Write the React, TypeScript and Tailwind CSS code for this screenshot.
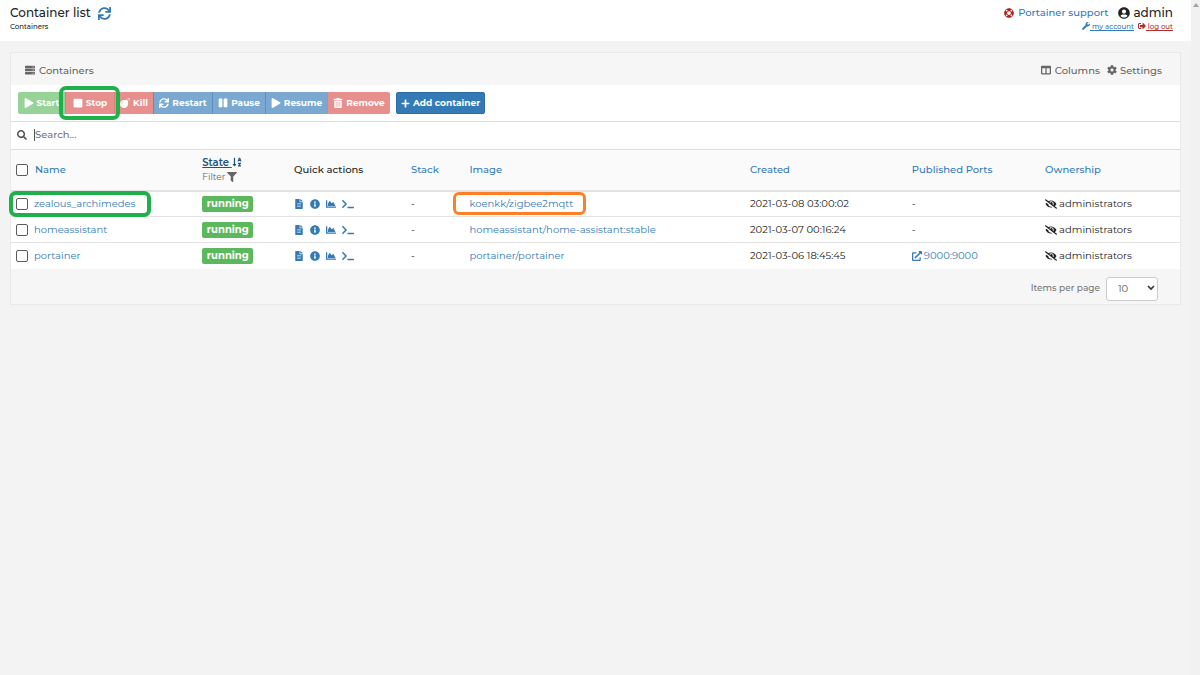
import React from "react";
import {
  FaBomb, FaChartArea, FaCog, FaColumns, FaExternalLinkAlt, FaEyeSlash, FaFileAlt, FaFilter,
  FaInfoCircle, FaLifeRing, FaPause, FaPlay, FaPlus, FaSearch, FaServer, FaSignOutAlt,
  FaSortAlphaDown, FaStop, FaSync, FaTerminal, FaTrashAlt, FaUserCircle, FaWrench,
} from "react-icons/fa";

type Container = { name: string; image: string; created: string; port?: string };

const containers: Container[] = [
  { name: "zealous_archimedes", image: "koenkk/zigbee2mqtt", created: "2021-03-08 03:00:02" },
  { name: "homeassistant", image: "homeassistant/home-assistant:stable", created: "2021-03-07 00:16:24" },
  { name: "portainer", image: "portainer/portainer", created: "2021-03-06 18:45:45", port: "9000:9000" },
];

const checkbox =
  "size-3 shrink-0 appearance-none rounded-[2px] border border-[#5c5c5c] bg-white checked:bg-[#337ab7]";
const action = "flex h-[22px] items-center justify-center gap-[3px] text-[9px] font-bold text-white";
const green = "border-[#84c284] bg-[#97d297]";
const red = "border-[#d98280] bg-[#e78f8d]";
const blue = "border-[#5c8fbf] bg-[#7ba8d1]";

const actions = [
  { label: "Start", Icon: FaPlay, style: `w-[47px] rounded-l-[2px] ${green}` },
  { label: "Stop", Icon: FaStop, style: `w-[49px] border-l ${red}`, ring: true },
  { label: "Kill", Icon: FaBomb, style: `w-[39px] border-l ${red}` },
  { label: "Restart", Icon: FaSync, style: `w-[59px] border-l ${blue}` },
  { label: "Pause", Icon: FaPause, style: `w-[53px] border-l ${blue}` },
  { label: "Resume", Icon: FaPlay, style: `w-[62px] border-l ${blue}` },
  { label: "Remove", Icon: FaTrashAlt, style: `w-[63px] rounded-r-[2px] border-l ${red}` },
];

function Header() {
  return (
    <header className="flex h-[41px] justify-between bg-white pl-[10px] pr-[18px] pt-[5px]">
      <div>
        <h1 className="flex items-center gap-[7px] text-[12px] font-medium leading-4 text-[#222]">
          Container list
          <a href="#refresh" aria-label="Refresh"><FaSync className="size-[13px] text-[#337ab7]" /></a>
        </h1>
        <p className="text-[7px] font-medium leading-3 text-[#222]">Containers</p>
      </div>
      <div className="flex flex-col items-end">
        <div className="flex items-center gap-[10px] leading-4">
          <a href="#support" className="flex items-center gap-1 text-[10px] font-medium text-[#337ab7]">
            <FaLifeRing className="size-[10px] text-[#b32020]" />Portainer support
          </a>
          <span className="flex items-center gap-[3px] text-[12px] font-medium text-[#222]">
            <FaUserCircle className="size-3" />admin
          </span>
        </div>
        <div className="flex gap-1 text-[7px] font-medium leading-3 underline">
          <a href="#account" className="text-[#337ab7]"><FaWrench className="inline size-2 align-[-1px]" /> my account</a>
          <a href="#logout" className="text-[#b03030]"><FaSignOutAlt className="inline size-2 align-[-1px]" /> log out</a>
        </div>
      </div>
    </header>
  );
}

function Toolbar() {
  return (
    <div className="flex h-9 items-center gap-[6px] px-[7px]">
      <div className="flex">
        {actions.map(({ label, Icon, style, ring }) => (
          <div key={label} className="relative">
            <button type="button" className={`${action} ${style}`}><Icon className="size-[10px]" />{label}</button>
            {ring && <span className="pointer-events-none absolute -inset-x-[6px] -inset-y-[6px] z-10 rounded-[7px] border-4 border-[#1faf4b]" />}
          </div>
        ))}
      </div>
      <button type="button" className={`${action} w-[89px] rounded-[2px] border border-[#2e6da4] bg-[#337ab7]`}>
        <FaPlus className="size-[9px]" />Add container
      </button>
    </div>
  );
}

function Row({ item, index }: { item: Container; index: number }) {
  return (
    <tr className="h-[26px] border-t border-[#e2e2e2] bg-white *:pl-[6px] first:border-t-2">
      <td>
        <div className="-ml-px flex items-center gap-[6px]">
          <input type="checkbox" aria-label={`Select ${item.name}`} className={checkbox} />
          <span className="relative">
            <a href={`#${item.name}`} className="text-[#337ab7]">{item.name}</a>
            {index === 0 && <span className="pointer-events-none absolute -inset-y-[6px] -left-[25px] -right-[16px] rounded-[7px] border-4 border-[#1faf4b]" />}
          </span>
        </div>
      </td>
      <td>
        <span className="flex h-4 w-[51px] items-center justify-center rounded-[2px] bg-[#5cb85c] text-[10px] font-bold text-white">running</span>
      </td>
      <td>
        <div className="flex items-center gap-[6px] text-[#337ab7]">
          <a href="#logs" aria-label="Logs"><FaFileAlt className="size-[10px]" /></a>
          <a href="#inspect" aria-label="Inspect"><FaInfoCircle className="size-[10px]" /></a>
          <a href="#stats" aria-label="Stats"><FaChartArea className="size-[10px]" /></a>
          <a href="#console" aria-label="Console"><FaTerminal className="size-3" /></a>
        </div>
      </td>
      <td>-</td>
      <td>
        <span className="relative">
          <a href={`#image-${index}`} className="text-[#337ab7]">{item.image}</a>
          {index === 0 && <span className="pointer-events-none absolute -inset-y-[5px] -left-4 -right-[13px] rounded-[6px] border-[3px] border-[#ff7f27]" />}
        </span>
      </td>
      <td>{item.created}</td>
      <td>
        {item.port ? (
          <a href="#port" className="flex items-center gap-[2px] text-[#337ab7]"><FaExternalLinkAlt className="size-[10px]" />{item.port}</a>
        ) : "-"}
      </td>
      <td>
        <span className="flex items-center gap-[2px]"><FaEyeSlash className="size-3" />administrators</span>
      </td>
    </tr>
  );
}

function ContainerTable() {
  return (
    <table className="w-full table-fixed border-collapse text-left text-[10px] leading-[14px] text-[#222]">
      <thead>
        <tr className="h-[41px] border-t border-[#ddd] bg-[#fafafa] text-[#337ab7] *:pl-[6px] *:font-medium">
          <th className="w-[15.85%]">
            <div className="-ml-px flex items-center gap-[7px]">
              <input type="checkbox" aria-label="Select all" className={checkbox} />
              <a href="#name">Name</a>
            </div>
          </th>
          <th className="w-[7.85%]">
            <a href="#state" className="font-semibold text-[#23527c] underline">State <FaSortAlphaDown className="inline size-[10px] align-[-1px]" /></a>
            <button type="button" className="flex items-center gap-[2px] text-[9px] font-normal text-[#666]">Filter<FaFilter className="size-[10px]" /></button>
          </th>
          <th className="w-[10%] text-[#222]">Quick actions</th>
          <th className="w-[5%]"><a href="#stack">Stack</a></th>
          <th className="w-[24%]"><a href="#image">Image</a></th>
          <th className="w-[13.85%]"><a href="#created">Created</a></th>
          <th className="w-[11.4%]"><a href="#ports">Published Ports</a></th>
          <th className="w-[12.05%]"><a href="#ownership">Ownership</a></th>
        </tr>
      </thead>
      <tbody>{containers.map((item, index) => <Row key={item.name} item={item} index={index} />)}</tbody>
    </table>
  );
}

export default function App() {
  return (
    <div className="flex min-h-screen bg-[#f3f3f3] font-['Montserrat','Inter',sans-serif]">
      <div className="min-w-0 flex-1">
        <Header />
        <main className="pl-[10px] pr-[10px] pt-[11px]">
          <section className="border border-[#e9e9e9] bg-white">
            <div className="flex h-8 items-center justify-between bg-[#f6f6f6] pl-[14px] pr-[18px] pt-[2px] text-[10px] font-medium text-[#666]">
              <h2 className="flex items-center gap-1"><FaServer className="size-[10px]" />Containers</h2>
              <div className="flex gap-[7px]">
                <button type="button" className="flex items-center gap-1"><FaColumns className="size-[10px]" />Columns</button>
                <button type="button" className="flex items-center gap-[3px]"><FaCog className="size-[10px]" />Settings</button>
              </div>
            </div>
            <Toolbar />
            <label className="flex h-7 items-center gap-[7px] border-t border-[#ddd] pb-[2px] pl-[6px] text-[#555]">
              <FaSearch className="size-[10px] shrink-0" />
              <input type="text" placeholder="Search..." aria-label="Search" className="h-3 w-full border-l border-[#555] text-[10px] font-medium outline-none placeholder:text-[#757575]" />
            </label>
            <ContainerTable />
            <div className="flex h-[35px] items-center justify-end gap-[6px] bg-[#f6f6f6] pr-[22px] pt-1 text-[#777]">
              <label htmlFor="page-size" className="text-[9px] font-medium">Items per page</label>
              <div className="relative">
                <select id="page-size" defaultValue="10" className="h-6 w-[52px] appearance-none rounded-[3px] border border-[#ccc] bg-white pl-[11px] text-[10px] text-[#555]">
                  <option>10</option>
                  <option>25</option>
                  <option>50</option>
                </select>
                <svg viewBox="0 0 8 6" className="pointer-events-none absolute right-[3px] top-[10px] h-[6px] w-2" fill="none" stroke="#333" strokeWidth="1.6"><path d="M1 1l3 3 3-3" /></svg>
              </div>
            </div>
          </section>
        </main>
      </div>
      <div aria-hidden="true" className="flex w-[9px] justify-center bg-[#f1f1f1] pt-[3px]">
        <svg viewBox="0 0 6 4" className="h-1 w-[6px]"><path d="M0 4l3-4 3 4z" fill="#a3a3a3" /></svg>
      </div>
    </div>
  );
}
